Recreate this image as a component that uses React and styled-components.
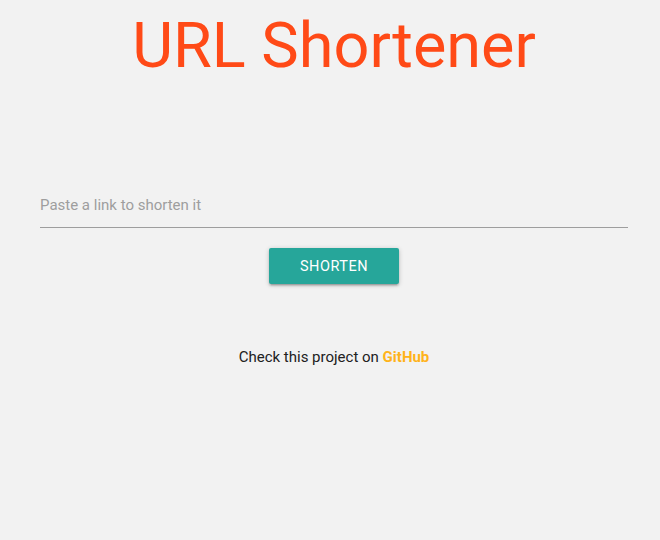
import React, { useState } from "react";
import styled, { createGlobalStyle } from "styled-components";

const GlobalStyle = createGlobalStyle`
  html, body {
    margin: 0;
    padding: 0;
    background: #f2f2f2;
    font-family: Roboto, "Liberation Sans", sans-serif;
  }
`;

const Page = styled.div`
  min-height: 540px;
  padding-left: 8px;
  display: flex;
  flex-direction: column;
  align-items: center;
`;

const Title = styled.h1`
  margin: 8px 0 0;
  font-size: 63px;
  font-weight: 400;
  line-height: 76px;
  color: #ff4a17;
`;

const Form = styled.form`
  width: 588px;
  margin-top: 99px;
  display: flex;
  flex-direction: column;
  align-items: center;
`;

const Input = styled.input`
  width: 100%;
  box-sizing: border-box;
  height: 45px;
  padding: 0;
  border: none;
  border-bottom: 1px solid #9e9e9e;
  background: transparent;
  outline: none;
  font-family: inherit;
  font-size: 15px;
  color: #212121;

  &::placeholder {
    color: #9e9e9e;
  }
`;

const Button = styled.button`
  margin-top: 20px;
  width: 130px;
  height: 36px;
  border: none;
  border-radius: 2px;
  background: #26a69a;
  color: #fff;
  font-family: inherit;
  font-size: 14.5px;
  letter-spacing: 0.5px;
  text-transform: uppercase;
  cursor: pointer;
  box-shadow: 0 2px 2px 0 rgba(0, 0, 0, 0.14), 0 3px 1px -2px rgba(0, 0, 0, 0.12),
    0 1px 5px 0 rgba(0, 0, 0, 0.2);
`;

const Footer = styled.p`
  margin: 64px 0 0;
  font-size: 15px;
  color: #212121;
`;

const Link = styled.a`
  color: #ffb31a;
  font-weight: 700;
  text-decoration: none;
`;

export default function App() {
  const [url, setUrl] = useState("");
  return (
    <>
      <GlobalStyle />
      <Page>
        <Title>URL Shortener</Title>
        <Form onSubmit={(e) => e.preventDefault()}>
          <Input
            value={url}
            onChange={(e) => setUrl(e.target.value)}
            placeholder="Paste a link to shorten it"
          />
          <Button type="submit">Shorten</Button>
        </Form>
        <Footer>
          Check this project on <Link href="#">GitHub</Link>
        </Footer>
      </Page>
    </>
  );
}
